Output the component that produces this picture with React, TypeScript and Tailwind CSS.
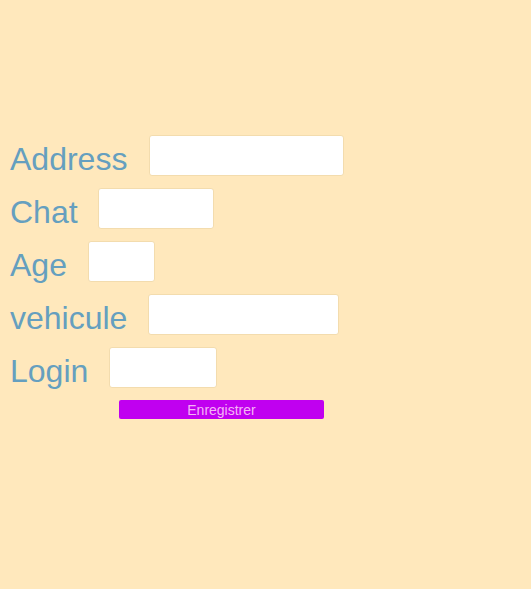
import React from 'react';

const fields = [
  { label: 'Address', width: 'w-[195px]', gap: 'gap-[22px]' },
  { label: 'Chat', width: 'w-[116px]', gap: 'gap-[20px]' },
  { label: 'Age', width: 'w-[67px]', gap: 'gap-[21px]' },
  { label: 'vehicule', width: 'w-[191px]', gap: 'gap-[21px]' },
  { label: 'Login', width: 'w-[108px]', gap: 'gap-[21px]' },
];

export default function App() {
  return (
    <div className="min-h-[589px] w-full bg-[#ffe8bc] pl-[10px] pt-[135px] font-['Liberation_Sans',Arial,sans-serif]">
      <form className="flex flex-col gap-[12px]" onSubmit={(e) => e.preventDefault()}>
        {fields.map((f) => (
          <div key={f.label} className={`flex h-[41px] items-start ${f.gap}`}>
            <label className="mt-[4px] text-[32px] leading-[41px] text-[#659fbf]">{f.label}</label>
            <input
              type="text"
              className={`${f.width} h-[41px] rounded-[3px] border border-[#f3dcae] bg-white outline-none`}
            />
          </div>
        ))}
      </form>
      <button
        type="button"
        className="ml-[109px] mt-[12px] h-[19px] w-[205px] rounded-[2px] bg-[#c000f0] pt-[1px] text-[14px] leading-[18px] text-[#f6b2f6]"
      >
        Enregistrer
      </button>
    </div>
  );
}
